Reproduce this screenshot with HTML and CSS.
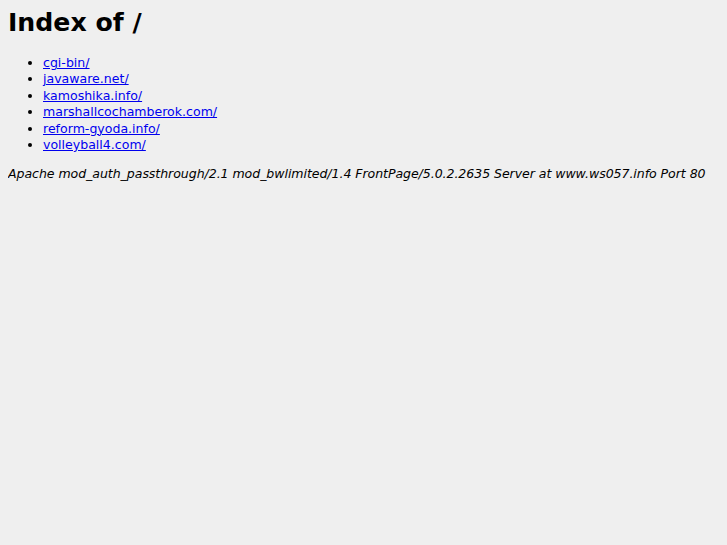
FILE: index.html
```html
<!DOCTYPE html>
<html>
	<head>
		<meta charset="UTF-8">
		<title>Index of /</title>
		<link rel="stylesheet" href="styles.css">
	</head>
	<body>
		<h1>Index of /</h1>
		<ul>
			<li><a href="cgi-bin/">cgi-bin/</a></li>
			<li><a href="javaware.net/">javaware.net/</a></li>
			<li><a href="kamoshika.info/">kamoshika.info/</a></li>
			<li><a href="marshallcochamberok.com/">marshallcochamberok.com/</a></li>
			<li><a href="reform-gyoda.info/">reform-gyoda.info/</a></li>
			<li><a href="volleyball4.com/">volleyball4.com/</a></li>
		</ul>
		<address>Apache mod_auth_passthrough/2.1 mod_bwlimited/1.4 FrontPage/5.0.2.2635 Server at www.ws057.info Port 80</address>
	</body>
</html>
```
FILE: styles.css
```css
html {
	background-color: #efefef;
}
body {
	margin: 8px;
	font-family: "DejaVu Sans", sans-serif;
	font-size: 12.55px;
	color: #000;
}
h1 {
	font-size: 25.2px;
	margin: 0 0 18px 0;
}
ul {
	margin: 0 0 13px 0;
	padding-left: 35px;
	line-height: 16.4px;
}
a {
	color: #0000ee;
}
address {
	font-style: italic;
	white-space: nowrap;
	letter-spacing: -0.055px;
}
```
